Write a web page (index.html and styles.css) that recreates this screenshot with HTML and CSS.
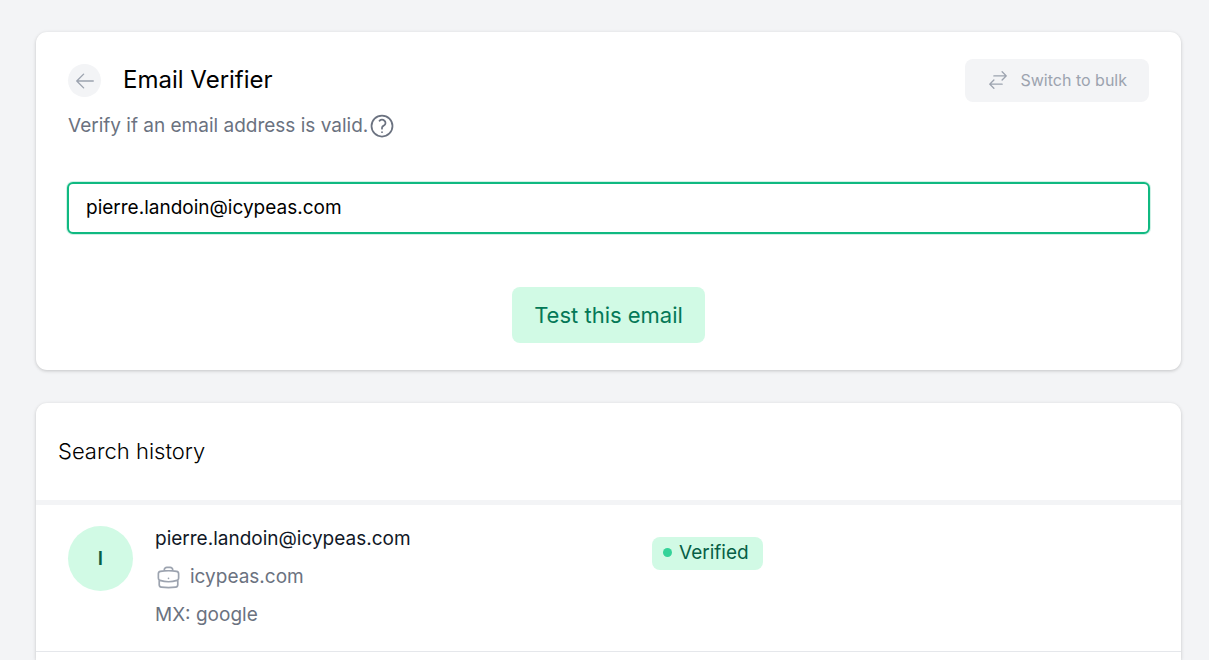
FILE: index.html
```html
<!DOCTYPE html>
<html lang="en">
<head>
    <meta charset="UTF-8">
    <meta name="viewport" content="width=device-width, initial-scale=1.0">
    <title>Email Verifier</title>
    <link rel="stylesheet" href="styles.css">
</head>
<body>
    <main class="page">
        <section class="card verifier">
            <div class="verifier-header">
                <a class="back" href="#" aria-label="Back">
                    <svg width="22" height="22" viewBox="0 0 24 24" fill="none" stroke="currentColor" stroke-width="1.5" stroke-linecap="round" stroke-linejoin="round">
                        <path d="M10.5 19.5 3 12m0 0 7.500-7.500M3 12h18"/>
                    </svg>
                </a>
                <h1 class="title">Email Verifier</h1>
                <button class="switch" type="button">
                    <svg width="22" height="22" viewBox="0 0 24 24" fill="none" stroke="currentColor" stroke-width="1.5" stroke-linecap="round" stroke-linejoin="round">
                        <path d="M7.500 21 3 16.500m0 0L7.500 12M3 16.500h13.500m0-13.500L21 7.500m0 0L16.500 12M21 7.500H7.500"/>
                    </svg>
                    Switch to bulk
                </button>
            </div>
            <div class="subtitle">
                <label for="email">Verify if an email address is valid.</label>
                <svg width="28" height="28" viewBox="0 0 24 24" fill="none" stroke="currentColor" stroke-width="1.5" stroke-linecap="round" stroke-linejoin="round">
                    <path d="M9.879 7.519c1.171-1.025 3.071-1.025 4.242 0 1.172 1.025 1.172 2.687 0 3.712-.203.179-.43.326-.67.442-.745.361-1.450.999-1.450 1.827v.750M21 12a9 9 0 1 1-18 0 9 9 0 0 1 18 0Zm-9 5.250h.008v.008H12v-.008Z"/>
                </svg>
            </div>
            <form class="verifier-form">
                <input class="email-input" id="email" type="text" value="pierre.landoin@icypeas.com">
                <button class="submit" type="button">Test this email</button>
            </form>
        </section>

        <section class="card history">
            <h2 class="history-title">Search history</h2>
            <ul class="history-list">
                <li class="history-row">
                    <div class="avatar">I</div>
                    <div class="row-cells">
                        <div class="contact">
                            <div class="contact-email">pierre.landoin@icypeas.com</div>
                            <div class="contact-domain">
                                <svg width="27" height="27" viewBox="0 0 24 24" fill="none" stroke="currentColor" stroke-width="1.5" stroke-linecap="round" stroke-linejoin="round">
                                    <path d="M20.250 14.150v4.250c0 1.094-.787 2.036-1.872 2.180-2.087.277-4.216.420-6.378.420s-4.291-.143-6.378-.420c-1.085-.144-1.872-1.086-1.872-2.180v-4.250m16.500 0a2.180 2.180 0 0 0 .750-1.661V8.706c0-1.081-.768-2.015-1.837-2.175a48.114 48.114 0 0 0-3.413-.387m4.500 8.006c-.194.165-.420.295-.673.380A23.978 23.978 0 0 1 12 15.750c-2.648 0-5.195-.429-7.577-1.220a2.016 2.016 0 0 1-.673-.380m0 0A2.180 2.180 0 0 1 3 12.489V8.706c0-1.081.768-2.015 1.837-2.175a48.111 48.111 0 0 1 3.413-.387m7.500 0V5.250A2.250 2.250 0 0 0 13.500 3h-3a2.250 2.250 0 0 0-2.250 2.250v.894m7.500 0a48.667 48.667 0 0 0-7.500 0M12 12.750h.008v.008H12v-.008Z"/>
                                </svg>
                                icypeas.com
                            </div>
                            <div class="contact-mx">MX: google</div>
                        </div>
                        <div class="status"><span class="badge">Verified</span></div>
                    </div>
                </li>
            </ul>
        </section>
    </main>
</body>
</html>
```

FILE: styles.css
```css
* {
    box-sizing: border-box;
}

body {
    margin: 0;
    background-color: #f3f4f6;
    color: #000;
    font-family: Inter, sans-serif;
    font-size: 19px;
}

h1,
h2,
ul {
    margin: 0;
    padding: 0;
    font-weight: 400;
}

button,
input {
    font: inherit;
}

svg {
    display: block;
    flex: none;
}

.page {
    display: flex;
    flex-direction: column;
    gap: 33px;
    min-height: 100vh;
    padding: 32px 28px 0 36px;
}

.card {
    background-color: #fff;
    border-radius: 11px;
    box-shadow: 0 1px 4px rgba(0, 0, 0, 0.1), 0 1px 3px rgba(0, 0, 0, 0.1);
}

.verifier {
    padding: 27px 31px;
}

.verifier-header {
    display: flex;
    align-items: center;
    padding: 0 1px;
}

.back {
    display: flex;
    align-items: center;
    justify-content: center;
    width: 33px;
    height: 33px;
    margin-right: 22px;
    border-radius: 50%;
    background-color: #f3f4f6;
    color: #9ca3af;
}

.title {
    flex: 1;
    padding-bottom: 2px;
    font-size: 24px;
}

.switch {
    display: flex;
    align-items: center;
    gap: 12px;
    height: 43px;
    padding: 0 22px 2px;
    border: 0;
    border-radius: 8px;
    background-color: #f3f4f6;
    color: #9ca3af;
    font-size: 16px;
}

.subtitle {
    display: flex;
    align-items: center;
    margin-top: 10px;
    padding: 0 1px;
    color: #6b7280;
}

.subtitle label {
    padding-bottom: 2px;
}

.verifier-form {
    display: flex;
    flex-direction: column;
    align-items: center;
    gap: 53px;
    margin-top: 42px;
}

.email-input {
    width: 100%;
    height: 52px;
    padding: 0 17px 2px;
    border: 2px solid #10b981;
    border-radius: 6px;
    outline: 0;
    background-color: #fff;
    box-shadow: 0 0 0 1px rgba(16, 185, 129, 0.2);
    color: #000;
}

.submit {
    height: 56px;
    padding: 0 22px;
    border: 0;
    border-radius: 8px;
    background-color: #d1fae5;
    color: #047857;
    font-size: 22px;
}

.history {
    flex: 1;
    border-radius: 11px 11px 0 0;
}

.history-title {
    padding: 32px 22px;
    border-bottom: 5px solid #f3f4f6;
    font-size: 22px;
    font-weight: 300;
    line-height: 33px;
}

.history-list {
    list-style: none;
}

.history-row {
    display: flex;
    gap: 22px;
    padding: 15px 32px 17px;
    border-bottom: 1px solid #e5e7eb;
}

.avatar {
    display: flex;
    align-items: center;
    justify-content: center;
    width: 65px;
    height: 65px;
    margin-top: 6px;
    border-radius: 50%;
    background-color: #d1fae5;
    color: #065f46;
    font-weight: 600;
}

.row-cells {
    display: grid;
    flex: 1;
    grid-template-columns: 1fr 1fr;
    align-items: start;
    line-height: 38px;
}

.contact-email {
    color: #111827;
}

.contact-domain {
    display: flex;
    align-items: center;
    gap: 8px;
    color: #6b7280;
}

.contact-domain svg {
    color: #9ca3af;
}

.contact-mx {
    color: #6b7280;
}

.status {
    display: flex;
    padding-top: 17px;
}

.badge {
    display: flex;
    align-items: center;
    gap: 7px;
    height: 33px;
    padding: 0 14px 2px 11px;
    border-radius: 8px;
    background-color: #d1fae5;
    color: #065f46;
}

.badge::before {
    content: "";
    width: 9px;
    height: 9px;
    border-radius: 50%;
    background-color: #34d399;
}
```
